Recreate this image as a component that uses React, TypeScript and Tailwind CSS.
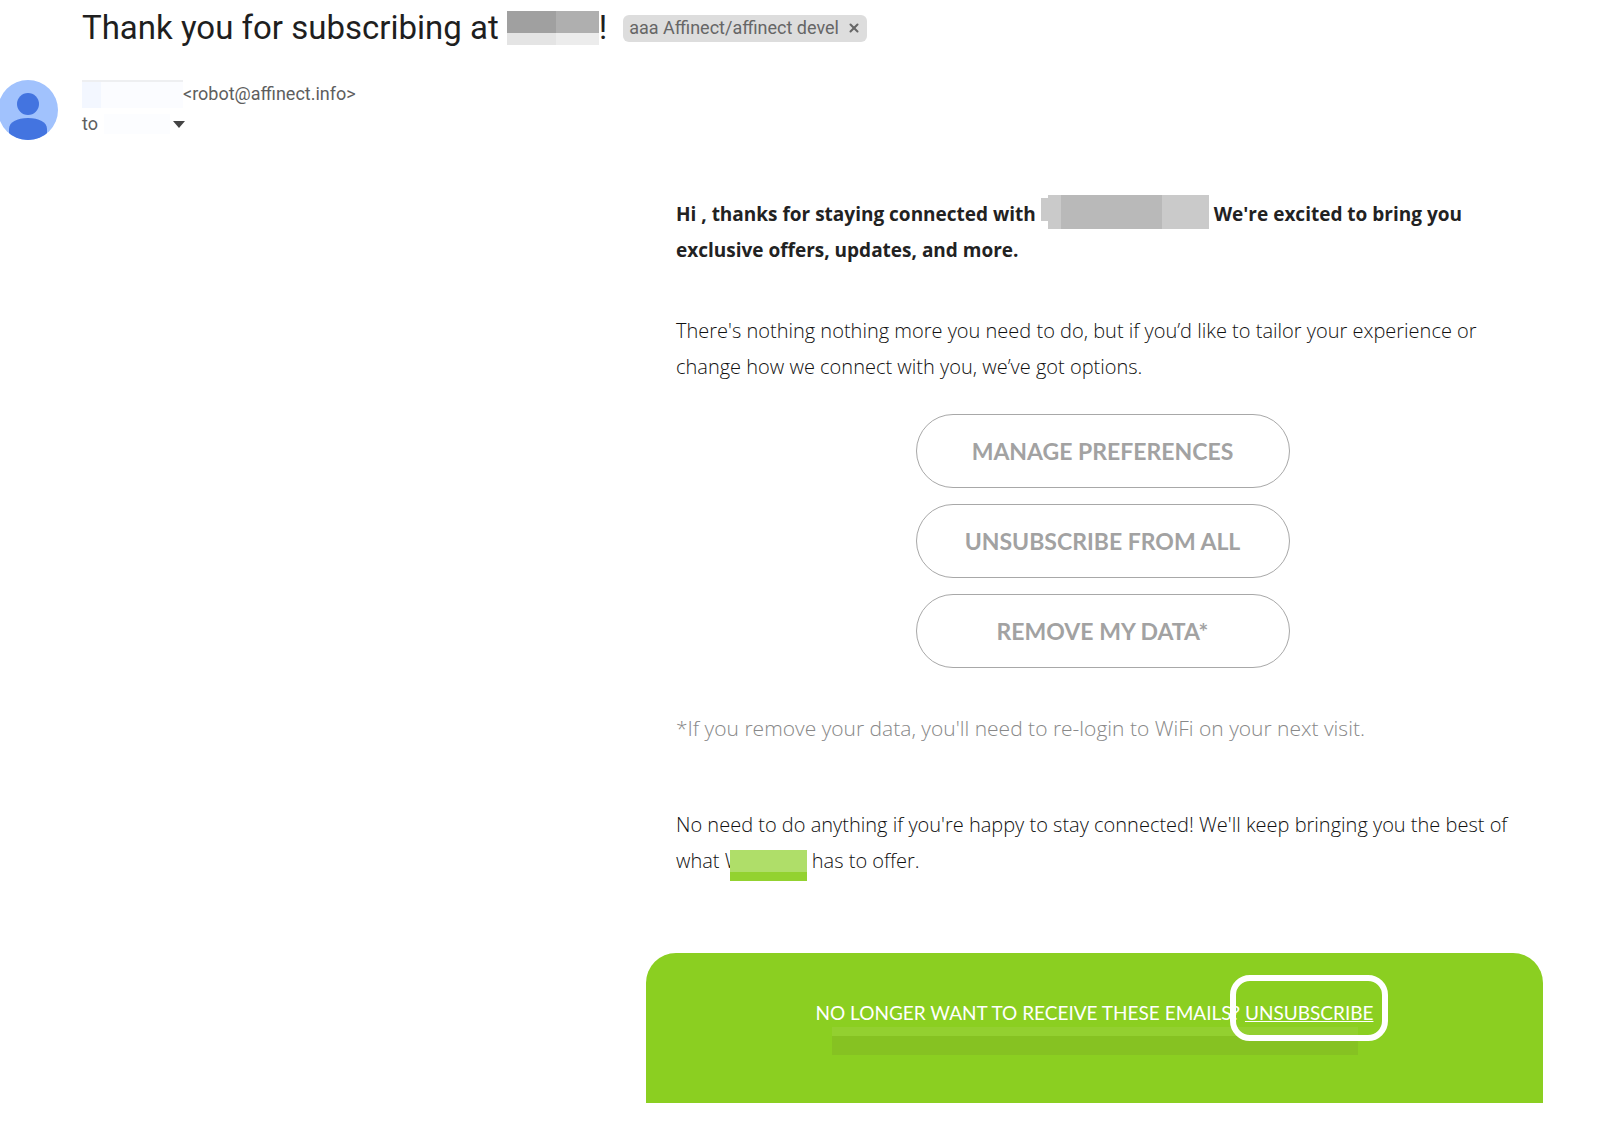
import { X } from "lucide-react";

const actions = ["MANAGE PREFERENCES", "UNSUBSCRIBE FROM ALL", "REMOVE MY DATA*"];

function Avatar() {
  return (
    <svg viewBox="0 0 60 60" className="-ml-0.5 size-15 shrink-0" role="img" aria-label="Sender avatar">
      <defs>
        <clipPath id="face">
          <circle cx="30" cy="30" r="30" />
        </clipPath>
      </defs>
      <g clipPath="url(#face)">
        <rect width="60" height="60" fill="#a1c2fd" />
        <circle cx="30" cy="24" r="11" fill="#4374e0" />
        <path d="M11 49c0-7 8-11 19-11s19 4 19 11v5.500C43 59 37 60 30 60s-13-1-19-5.500z" fill="#4374e0" />
      </g>
    </svg>
  );
}

function Header() {
  return (
    <header>
      <div className="flex h-14 items-center pl-[82px]">
        <h1 className="flex items-center whitespace-nowrap font-['Roboto'] text-[33px] leading-10 text-[#1f1f1f]">
          Thank you for subscribing at
          <span className="ml-2 grid h-[34px] w-[92px] grid-cols-[49px_43px] grid-rows-[22px_12px]">
            <span className="bg-[#a0a0a0]" />
            <span className="bg-[#afafaf]" />
            <span className="bg-[#e4e4e4]" />
            <span className="bg-[#ececec]" />
          </span>
          !
        </h1>
        <span className="ml-4 flex h-[27px] items-center gap-2 rounded-md bg-[#ddd] px-1.5 font-['Roboto'] text-lg text-[#666]">
          aaa Affinect/affinect devel
          <button type="button" aria-label="Remove label" className="flex">
            <X className="size-3.5" strokeWidth={3.5} />
          </button>
        </span>
      </div>
      <div className="mt-6 flex items-start">
        <Avatar />
        <div className="ml-6 font-['Roboto'] text-lg text-[#5e5e5e]">
          <div className="flex h-7 items-center">
            <span className="grid h-7 w-[101px] grid-cols-[19px_82px] border-t-2 border-[#eeeff1]">
              <span className="bg-[#f3f7ff]" />
              <span className="bg-[#fbfcff]" />
            </span>
            &lt;robot@affinect.info&gt;
          </div>
          <div className="flex h-8 items-center">
            to
            <span className="ml-1.5 h-5 w-[66px] bg-[#fcfdff]" />
            <button type="button" aria-label="Show details" className="ml-[3px]">
              <svg viewBox="0 0 12 7" className="h-[7px] w-3">
                <path d="M0 0h12L6 7z" fill="#444" />
              </svg>
            </button>
          </div>
        </div>
      </div>
    </header>
  );
}

export default function App() {
  return (
    <div className="min-h-screen bg-white">
      <Header />
      <main className="mt-14 mr-[72px] ml-[40%] font-['Open_Sans'] text-xl leading-9 font-light text-[#111]">
        <div className="pr-5 pl-[30px]">
          <p className="text-[19px] leading-9 font-bold text-[#222]">
            Hi , thanks for staying connected with{" "}
            <span className="-mt-2 -mb-2 inline-grid h-[34px] w-[168px] grid-cols-[7px_13px_101px_47px]">
              <span className="mt-[3px] mb-2 bg-[#cacaca]" />
              <span className="bg-[#cacaca]" />
              <span className="bg-[#b9b9b9]" />
              <span className="bg-[#cacaca]" />
            </span>{" "}
            We're excited to bring you exclusive offers, updates, and more.
          </p>
          <p className="mt-[45px]">
            There's nothing nothing more you need to do, but if you’d like to tailor your experience or change how we
            connect with you, we’ve got options.
          </p>
          <div className="mt-[29px] flex flex-col items-center gap-4 pl-1.5">
            {actions.map((label) => (
              <button
                key={label}
                type="button"
                className="h-[74px] w-[374px] rounded-[37px] border border-[#a8a8a8] font-['Lato'] text-[23px] font-bold text-[#a2a2a2]"
              >
                {label}
              </button>
            ))}
          </div>
          <p className="mt-[42px] text-[21px] leading-9 text-[#888]">
            *If you remove your data, you'll need to re-login to WiFi on your next visit.
          </p>
          <p className="mt-[61px]">
            No need to do anything if you're happy to stay connected! We'll keep bringing you the best of what W
            <span className="relative -mt-2 -mb-6 -ml-[13px] inline-grid h-[31px] w-[77px] grid-rows-[22px_9px] align-[-4px]">
              <span className="bg-[#afde69]" />
              <span className="bg-[#93d230]" />
            </span>{" "}
            has to offer.
          </p>
        </div>
        <footer className="mt-[74px] flex h-[150px] flex-col items-center rounded-t-[30px] bg-[#8bcf21] pt-[42px] font-['Lato'] text-[19px] leading-9 font-normal text-white">
          <p className="relative z-10">
            NO LONGER WANT TO RECEIVE THESE EMAILS?{" "}
            <span className="relative inline-block">
              <a href="#unsubscribe" className="underline">
                UNSUBSCRIBE
              </a>
              <span className="pointer-events-none absolute -inset-x-[15px] -top-5 -bottom-[10px] rounded-[20px] border-[6px] border-white" />
            </span>
          </p>
          <div className="-mt-1 grid h-7 w-[526px] grid-rows-[9px_19px]">
            <span className="bg-[#93d030]" />
            <span className="bg-[#86c222]" />
          </div>
        </footer>
      </main>
    </div>
  );
}
